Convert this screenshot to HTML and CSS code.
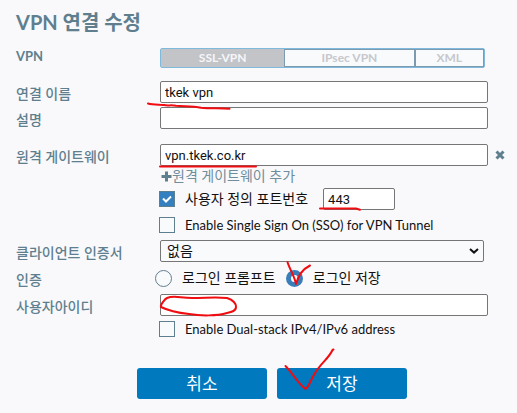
FILE: index.html
```html
<!DOCTYPE html>
<html lang="ko">
<head>
<meta charset="utf-8">
<meta name="viewport" content="width=device-width, initial-scale=1">
<title>VPN 연결 수정</title>
<link rel="stylesheet" href="styles.css">
</head>
<body>
<main class="page">
  <h1 class="title">VPN 연결 수정</h1>
  <form class="form">
    <div class="row row-type">
      <span class="label label-strong" id="type-label">VPN</span>
      <div class="tabs" role="group" aria-labelledby="type-label">
        <button type="button" class="tab tab-ssl tab-active">SSL-VPN</button>
        <button type="button" class="tab tab-ipsec">IPsec VPN</button>
        <button type="button" class="tab tab-xml">XML</button>
      </div>
    </div>
    <div class="row row-name">
      <label class="label" for="name">연결 이름</label>
      <input class="field" id="name" type="text" value="tkek vpn">
    </div>
    <div class="row">
      <label class="label" for="desc">설명</label>
      <input class="field" id="desc" type="text">
    </div>
    <div class="row row-gateway">
      <label class="label" for="gateway">원격 게이트웨이</label>
      <input class="field" id="gateway" type="text" value="vpn.tkek.co.kr">
      <button type="button" class="remove" aria-label="삭제"><svg class="remove-icon" viewBox="0 0 10 10"><path d="M1.500 1.500 8.500 8.500M8.500 1.500 1.500 8.500"/></svg></button>
    </div>
    <div class="options">
      <a class="add" href="#"><svg class="add-icon" viewBox="0 0 11 11"><path d="M5.5 0.5v10M0.5 5.5h10"/></svg>원격 게이트웨이 추가</a>
      <div class="option">
        <input class="check" id="port-on" type="checkbox" checked>
        <label class="option-label option-label-ko" for="port-on">사용자 정의 포트번호</label>
        <input class="field port" type="text" value="443" aria-label="포트번호">
      </div>
      <div class="option">
        <input class="check" id="sso" type="checkbox">
        <label class="option-label" for="sso">Enable Single Sign On (SSO) for VPN Tunnel</label>
      </div>
    </div>
    <div class="row">
      <label class="label" for="cert">클라이언트 인증서</label>
      <div class="select-wrap">
        <select class="field select" id="cert"><option>없음</option></select>
        <svg class="chevron" viewBox="0 0 10 6"><path d="M1 1l4 3.6L9 1"/></svg>
      </div>
    </div>
    <div class="row row-auth">
      <span class="label" id="auth-label">인증</span>
      <div class="radios" role="radiogroup" aria-labelledby="auth-label">
        <input class="radio" id="prompt" type="radio" name="auth">
        <label class="radio-label" for="prompt">로그인 프롬프트</label>
        <input class="radio" id="save" type="radio" name="auth" checked>
        <label class="radio-label" for="save">로그인 저장</label>
      </div>
    </div>
    <div class="row">
      <label class="label" for="user">사용자아이디</label>
      <input class="field" id="user" type="text">
    </div>
    <div class="options">
      <div class="option">
        <input class="check" id="dual" type="checkbox">
        <label class="option-label" for="dual">Enable Dual-stack IPv4/IPv6 address</label>
      </div>
    </div>
    <div class="actions">
      <button type="button" class="action">취소</button>
      <button type="submit" class="action">저장</button>
    </div>
  </form>
  <svg class="marks" viewBox="0 0 517 413" aria-hidden="true">
    <path d="M148 103.500c5 1.500 11 1 16 1.500 3 1 7-.2 12 .7 8 .8 16 .3 25 2 10 1 19 .1 28.500 1"/>
    <path d="M160 166.500H256"/>
    <path d="M320 208.500H356l4 1.200"/>
    <path d="M287.500 262c2 7 7 14 8.500 22 2-8 7-15 14-18.500"/>
    <path d="M161 307c-1-2 4-8 6-9 7-3 13 0 25 0 14 0 24-1 35 0 6 2 9 5 9 9 0 4-4 5-9 6-10 3-26 3-38 1-9-1-22-4-28-7z"/>
    <path d="M285.500 366c7 7 12 17 20 23 4-3 5-9 9-15 6-11 14-15 18-24l1-.5"/>
  </svg>
</main>
</body>
</html>
```
FILE: styles.css
```css
* { box-sizing: border-box; }

body {
  margin: 0;
  background: #f9f9fc;
  color: #111;
  font-family: Lato, "Noto Sans CJK KR", sans-serif;
  font-size: 14px;
  line-height: 20px;
}

button, input, select { margin: 0; font: inherit; }

.page { position: relative; padding: 8px 29px 14px 16px; }

.title {
  margin: 0;
  color: #607f8e;
  font-size: 20px;
  line-height: 28px;
  font-weight: 700;
}

.form { display: flex; flex-direction: column; gap: 4px; }

.row { display: flex; align-items: center; height: 22px; }
.row-type { height: 20px; margin-top: 12px; }
.row-name { margin-top: 9px; }
.row-gateway { margin-top: 11px; }
.row-auth { height: 24px; }

.label {
  flex: 0 0 144px;
  padding-top: 4px;
  color: #607f8e;
  font-size: 14px;
  font-weight: 500;
}
.label-strong { padding: 0 0 4px; font-size: 13px; font-weight: 700; }

.tabs {
  display: flex;
  flex: 1;
  height: 20px;
  margin-right: 3px;
  border: 1px solid #7fb9dc;
  border-radius: 2px;
}
.tab {
  padding: 0;
  border: 1px solid #7d9bb0;
  background: #f9fafc;
  color: #c6c8cc;
  font-size: 12px;
  line-height: 14px;
  font-weight: 700;
}
.tab-ssl { flex: 124; }
.tab-ipsec { flex: 131; }
.tab-xml { flex: 69; }
.tab-active { border-color: #c3c4c8; background: #c3c4c8; color: #f5f6f8; }

.field {
  flex: 1;
  min-width: 0;
  height: 22px;
  padding: 0 4px;
  border: 1px solid #767676;
  border-radius: 2px;
  background: #fff;
  color: #111;
  font-family: Roboto, "Noto Sans CJK KR", sans-serif;
  font-size: 13px;
}

.remove {
  width: 10px;
  height: 10px;
  margin: 0 -17px 0 7px;
  padding: 0;
  border: 0;
  background: none;
}
.remove-icon { display: block; stroke: #607f8e; stroke-width: 3; }

.options { display: flex; flex-direction: column; gap: 4px; margin-top: -2px; padding-left: 143px; }

.add {
  display: flex;
  align-items: center;
  height: 16px;
  padding-left: 2px;
  color: #708d9b;
  font-size: 14px;
  text-decoration: none;
}
.add-icon { width: 11px; height: 11px; stroke: #607f8e; stroke-width: 3; }

.option { display: flex; align-items: center; height: 22px; }
.option-label { margin-left: 10px; font-size: 13px; }
.option-label-ko { font-size: 14px; }

.check, .radio {
  appearance: none;
  flex: none;
  width: 16px;
  height: 16px;
  border: 1px solid #607f8e;
  background: #f9fafc;
}
.check:checked {
  background: #337fc0 url("data:image/svg+xml,%3Csvg xmlns='http://www.w3.org/2000/svg' viewBox='0 0 14 14'%3E%3Cpath d='M3 6.500l3 3 5-5' fill='none' stroke='white' stroke-width='2'/%3E%3C/svg%3E");
}
.radio { width: 17px; height: 17px; border-radius: 50%; }
.radio:checked { border: 5px solid #397eb8; background: #fff; }

.port { flex: 0 0 72px; margin-left: 15px; }

.select-wrap { display: flex; flex: 1; position: relative; margin-right: 4px; }
.select { appearance: none; background: #f9fafc; padding: 0 6px; font-size: 14px; }
.chevron {
  position: absolute;
  right: 5px;
  top: 8px;
  width: 10px;
  height: 6px;
  fill: none;
  stroke: #111;
  stroke-width: 2;
}

.radios { display: flex; align-items: center; margin-left: -5px; }
.radio-label { margin: 0 10px; }

.actions { display: flex; justify-content: center; gap: 10px; margin-top: 24px; padding-left: 40px; }
.action {
  width: 130px;
  height: 31px;
  padding: 0;
  border: 0;
  border-radius: 3px;
  background: #0079bf;
  color: #fff;
  font-size: 17px;
}

.marks {
  position: absolute;
  left: 0;
  top: 0;
  width: 517px;
  height: 413px;
  fill: none;
  stroke: #f00c10;
  stroke-width: 2;
  stroke-linecap: round;
  stroke-linejoin: round;
  pointer-events: none;
}
```
